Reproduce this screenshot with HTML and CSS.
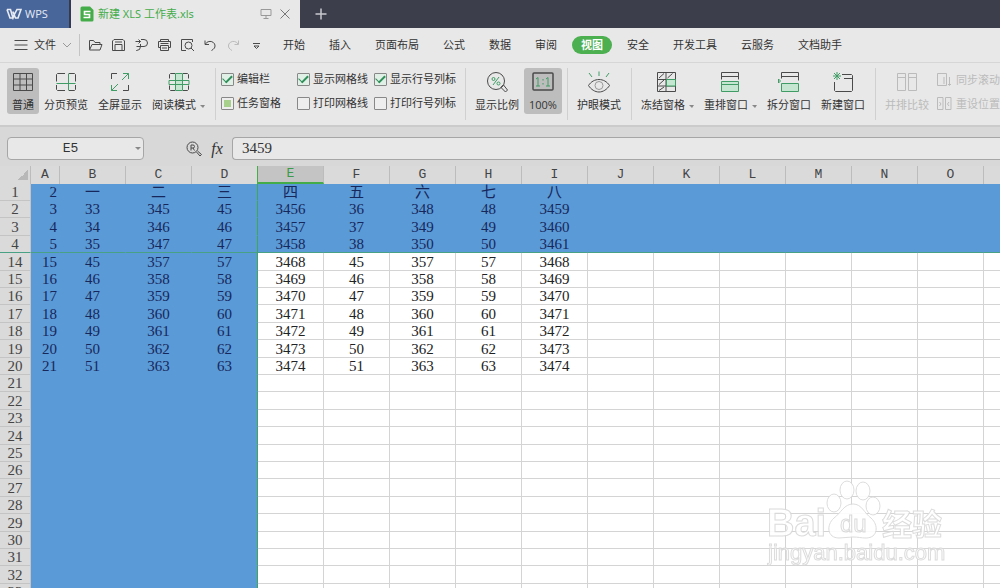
FILE: index.html
```html
<!DOCTYPE html>
<html lang="zh-CN">
<head>
  <meta charset="UTF-8">
  <meta name="viewport" content="width=device-width, initial-scale=1.0">
  <title>新建 XLS 工作表.xls</title>
  <link rel="stylesheet" href="styles.css">
</head>
<body>
  <!-- Title bar -->
  <header class="title-bar">
    <button class="wps-home">
      <svg width="16" height="12" viewBox="0 0 16 12"><path d="M1 1.500h3.500l2.500 8.500 2-5M1 1.500l3 8.500h2.500l4.500-8.500h4L12 10H9.500L6.800 3.500" stroke-width="1.600"/></svg>
      WPS
    </button>
    <div class="file-tab">
      <svg width="14" height="16" viewBox="0 0 14 16"><path d="M2 .5h8L13.500 4v10a1.500 1.500 0 0 1-1.500 1.500H2A1.500 1.500 0 0 1 .5 14V2A1.500 1.500 0 0 1 2 .5z" fill="#45ac4a" stroke="none"/><path d="M10.500 5.500H4.500v3h5v3h-6" stroke="#fff" stroke-width="1.600"/></svg>
      <span class="file-name">新建 XLS 工作表.xls</span>
      <button aria-label="投影"><svg class="gray" width="12" height="12" viewBox="0 0 12 12"><path d="M1 1.500h10v6H1zM6 7.500v3M3.500 10.500h5"/></svg></button>
      <button aria-label="关闭"><svg class="gray-dark" width="12" height="12" viewBox="0 0 12 12"><path d="M1.500 1.500l9 9M10.500 1.500l-9 9"/></svg></button>
    </div>
    <button class="new-tab" aria-label="新建"><svg width="12" height="12" viewBox="0 0 12 12"><path d="M6 .5v11M.5 6h11" stroke-width="1.500"/></svg></button>
  </header>

  <!-- Menu bar -->
  <nav class="menu-bar">
    <button class="file-menu">
      <svg width="14" height="12" viewBox="0 0 14 12"><path d="M.5 1.500h13M.5 6h13M.5 10.500h13"/></svg>
      文件
      <svg class="gray" width="10" height="8" viewBox="0 0 10 8"><path d="M1 2l4 4 4-4"/></svg>
    </button>
    <div class="quick-access">
      <button aria-label="打开"><svg width="15" height="14" viewBox="0 0 15 14"><path d="M1.500 11.500v-9h4l1.500 2h5v2M1.500 12l2.500-5.500h10L12 12z"/></svg></button>
      <button aria-label="保存"><svg width="15" height="14" viewBox="0 0 15 14"><path d="M1.500 3l1.500-1.500h9L13.500 3v9.500h-12zM4 12V6.500h7V12M4 4h7"/></svg></button>
      <button aria-label="输出PDF"><svg width="15" height="14" viewBox="0 0 15 14"><path d="M1.500 3.500h5M4.500 1.500l2 2-2 2M7 1.500h3a3.500 3.500 0 0 1 0 7H2.500M6.500 6v2.500a4 4 0 0 1-4 4H2"/></svg></button>
      <button aria-label="打印"><svg width="15" height="14" viewBox="0 0 15 14"><path d="M3.500 3.500v-2h8v2M3.500 9.500h-2v-6h12v6h-2M3.500 7.500h8v5h-8zM5 10h5M3.500 5.500h8"/></svg></button>
      <button aria-label="打印预览"><svg width="15" height="14" viewBox="0 0 15 14"><path d="M6 12.500H1.500v-11h11V4"/><circle cx="8.500" cy="7.500" r="3.500"/><path d="M11 10l3 3"/></svg></button>
      <button aria-label="撤销"><svg width="15" height="14" viewBox="0 0 15 14"><path d="M2 2.500v4h4M2.500 6A5 4.500 0 1 1 10 11.500L8.500 12.500"/></svg></button>
      <button aria-label="恢复" disabled><svg class="gray-light" width="15" height="14" viewBox="0 0 15 14"><path d="M12.500 2.500v4h-4M12 6A5 4.500 0 1 0 4.500 11.500L6 12.500"/></svg></button>
      <button aria-label="更多"><svg width="15" height="14" viewBox="0 0 15 14"><path d="M4 5.500h7M5 8l2.500 2.500L10 8z"/></svg></button>
    </div>
    <div class="tabs">
      <button>开始</button>
      <button>插入</button>
      <button>页面布局</button>
      <button>公式</button>
      <button>数据</button>
      <button>审阅</button>
      <button class="active">视图</button>
      <button>安全</button>
      <button>开发工具</button>
      <button>云服务</button>
      <button>文档助手</button>
    </div>
  </nav>

  <!-- Ribbon -->
  <section class="ribbon">
    <div class="group">
      <button class="tool pressed">
        <svg width="22" height="22" viewBox="0 0 22 22"><path d="M1.500 2.500h19v17h-19zM1.500 8h19M1.500 14h19M8 2.500v17M14.500 2.500v17"/></svg>
        <span>普通</span>
      </button>
      <button class="tool">
        <svg width="22" height="22" viewBox="0 0 22 22"><path d="M1.500 10.500v-7l1-1h7.500M14 2.500h5.500l1 1v7M1.500 14v4.500l1 1h7.500M14 19.500h5.500l1-1V14"/><path class="green" d="M1.500 12.500h19M13.500 2.500v17"/></svg>
        <span>分页预览</span>
      </button>
      <button class="tool">
        <svg width="22" height="22" viewBox="0 0 22 22"><path d="M2.500 8V2.500H8M14 19.500h5.500V14"/><path class="green" d="M13 9l6.500-6.500M14 2.500h5.500V8M9 13l-6.500 6.500M2.500 14v5.500H8"/></svg>
        <span>全屏显示</span>
      </button>
      <button class="tool">
        <svg width="22" height="22" viewBox="0 0 22 22"><path d="M1.500 7.500v-4l1-1H7M15 2.500h4.500l1 1v4M1.500 14.500v4l1 1H7M15 19.500h4.500l1-1v-4"/><path class="green fill" d="M7.500 2.500h7v17h-7z"/><path class="green" d="M1 9.500h20v4H1z"/></svg>
        <span class="drop">阅读模式</span>
      </button>
    </div>
    <div class="group checks">
      <label><input type="checkbox" checked>编辑栏</label>
      <label><input type="checkbox" checked>显示网格线</label>
      <label><input type="checkbox" checked>显示行号列标</label>
      <label><input type="checkbox" class="partial">任务窗格</label>
      <label><input type="checkbox">打印网格线</label>
      <label><input type="checkbox">打印行号列标</label>
    </div>
    <div class="group">
      <button class="tool">
        <svg width="22" height="22" viewBox="0 0 22 22"><circle cx="10" cy="10" r="8.500"/><path d="M16 15l1.500-1 4 5-2 2-4.500-4.500z"/><path class="green" d="M13 6l-6 8"/><circle class="green" cx="7.500" cy="8" r="1.500"/><circle class="green" cx="12.500" cy="12.500" r="1.500"/></svg>
        <span>显示比例</span>
      </button>
      <button class="tool pressed">
        <svg width="22" height="22" viewBox="0 0 22 22"><rect x="1" y="2" width="20" height="17" rx="1" stroke-width="1.500"/><path class="green" d="M4 8l2-1.500V15M4 15h4M11 8v1.500M11 12v1.500M14 8l2-1.500V15M14 15h4"/></svg>
        <span>100%</span>
      </button>
    </div>
    <div class="group">
      <button class="tool">
        <svg width="22" height="22" viewBox="0 0 22 22"><path d="M.5 14.500C3 10.500 7 8.500 11 8.500s8 2 10.500 6c-2.500 4-6.500 6.500-10.500 6.500S3 18.500.5 14.500z"/><circle class="gray" cx="11" cy="14.500" r="4"/><path class="green" d="M1 2l3 4M11 .5V5M21 2l-3 4"/></svg>
        <span>护眼模式</span>
      </button>
    </div>
    <div class="group">
      <button class="tool">
        <svg width="22" height="22" viewBox="0 0 22 22"><path d="M1.500 1.500h18v19h-18zM1.500 8.500h18M1.500 15h18M10 1.500v19M3 7l5-4.500M11.500 7l5-4.500M3 13.500l5-4.500M3 19.500L8 16"/><path class="green fill" d="M10.500 8.500h9v6.500h-9z"/></svg>
        <span class="drop">冻结窗格</span>
      </button>
      <button class="tool">
        <svg width="22" height="22" viewBox="0 0 22 22"><path d="M2.500 8.500v-7h17v7M2.500 5.500h17"/><path class="green fill" d="M2.500 10.500h17v10h-17z"/><path class="green" d="M2.500 13.500h17"/></svg>
        <span class="drop">重排窗口</span>
      </button>
      <button class="tool">
        <svg width="22" height="22" viewBox="0 0 22 22"><path d="M3.500 7.500v-6h17v8M3.500 5.500h17"/><path class="green fill" d="M3.500 12.500h17v8h-17z"/><path class="green" d="M.5 8l2 2-2 2z"/></svg>
        <span>拆分窗口</span>
      </button>
      <button class="tool">
        <svg width="22" height="22" viewBox="0 0 22 22"><path d="M2.500 11v8.500l1 1h16l1-1v-15l-1-1H10M12 7.500h8.500"/><path class="green" d="M5 1v8M1 5h8M2 2l6 6M8 2L2 8"/></svg>
        <span>新建窗口</span>
      </button>
    </div>
    <div class="group">
      <button class="tool" disabled>
        <svg width="22" height="22" viewBox="0 0 22 22"><path d="M1.500 2.500h8v17h-8zM12.500 2.500h8v17h-8zM1.500 6.500h8M12.500 6.500h8"/></svg>
        <span>并排比较</span>
      </button>
      <div class="side-tools">
        <button disabled><svg width="15" height="14" viewBox="0 0 15 14"><path d="M.5.5h9v12h-9zM7 4v7M12.500 4v8M14 11l-1.500 1.500L11 11"/></svg>同步滚动</button>
        <button disabled><svg width="15" height="14" viewBox="0 0 15 14"><path d="M.5.5h5.500v12H.5zM8.500.5H14v12H8.500zM2.500 5L4 7 2.500 9M12 5l-1.500 2L12 9"/></svg>重设位置</button>
      </div>
    </div>
  </section>

  <!-- Formula bar -->
  <section class="formula-bar">
    <div class="name-box">
      <input type="text" value="E5" aria-label="名称框">
      <button aria-label="名称列表"></button>
    </div>
    <button class="find" aria-label="查找"><svg width="16" height="16" viewBox="0 0 16 16"><circle cx="6.500" cy="6.500" r="5.500"/><path d="M10.500 11l3.500 4 1.500-1.500-4-3.500M5 9.500V4h2a1.500 1.500 0 0 1 0 3H5M7 7l1.500 2.500"/></svg></button>
    <button class="fx" aria-label="插入函数">fx</button>
    <input class="formula" type="text" value="3459" aria-label="编辑栏">
  </section>

  <!-- Sheet -->
  <main class="sheet">
    <table id="grid">
      <colgroup id="cols"></colgroup>
      <thead id="grid-head"></thead>
      <tbody id="grid-body"></tbody>
    </table>
  </main>

  <svg class="watermark" width="190" height="100" viewBox="0 0 190 100">
    <ellipse cx="74" cy="31" rx="7" ry="9"/>
    <ellipse cx="87" cy="18" rx="7" ry="9"/>
    <ellipse cx="103" cy="19" rx="7" ry="9"/>
    <ellipse cx="113" cy="34" rx="7" ry="9"/>
    <path d="M93 32c9 0 11 9 18 14 8 7 7 20-5 20-5 0-8-1-13-1s-9 1-14 1c-12 0-13-13-5-20 7-5 10-14 19-14z"/>
    <text class="brand" x="7" y="64">Bai</text>
    <text class="du" x="80" y="60">du</text>
    <text class="cjk" x="122" y="63">经验</text>
    <text class="url" x="8" y="88">jingyan.baidu.com</text>
  </svg>

  <script>
    const letters = "ABCDEFGHIJKLMNOPQRSTUVWXYZ".split("");
    const firstRow = ["2", "一", "二", "三", "四", "五", "六", "七", "八"];
    // rows 5 - 13 are scrolled out of view behind the frozen pane
    const rowNumbers = [1, 2, 3, 4];
    for (let n = 14; n <= 60; n++) rowNumbers.push(n);

    // Values of one row, columns A to I
    function rowValues(n) {
      if (n === 1) return firstRow;
      if (n > 20) return [];
      return [n + 1, n + 31, n + 343, n + 43, n + 3454, n < 14 ? n + 34 : n + 31,
              n < 14 ? n + 346 : n + 343, n < 14 ? n + 46 : n + 43, n < 14 ? n + 3457 : n + 3454];
    }

    document.getElementById("cols").innerHTML =
      `<col class="col-row"><col class="col-a">` + letters.slice(1).map(() => "<col>").join("");

    document.getElementById("grid-head").innerHTML =
      `<tr><th class="corner"></th>` +
      letters.map(l => `<th class="${l === "E" ? "selected" : ""}${l === "D" ? "edge" : ""}">${l}</th>`).join("") +
      `</tr>`;

    document.getElementById("grid-body").innerHTML = rowNumbers.map(n => {
      const values = rowValues(n);
      const cells = letters.map((l, i) => `<td>${values[i] === undefined ? "" : values[i]}</td>`).join("");
      return `<tr class="${n <= 4 ? "frozen" : ""}"><th>${n}</th>${cells}</tr>`;
    }).join("");
  </script>
</body>
</html>
```
FILE: styles.css
```css
* {
  box-sizing: border-box;
}

body {
  margin: 0;
  height: 100vh;
  display: flex;
  flex-direction: column;
  overflow: hidden;
  background: #e8e8e8;
  color: #333;
  font-family: "Open Sans", "Noto Sans CJK SC", sans-serif;
  font-size: 11px;
  line-height: 16px;
  white-space: nowrap;
}

button {
  border: none;
  padding: 0;
  background: none;
  color: inherit;
  font: inherit;
  cursor: pointer;
}

input {
  font: inherit;
  color: inherit;
}

svg {
  display: block;
  flex: none;
  fill: none;
  stroke: #4a4a4a;
}

.green {
  stroke: #3f9c64;
}

.green.fill {
  fill: #c5e6d0;
}

.gray {
  stroke: #999;
}

.gray-dark {
  stroke: #777;
}

.gray-light {
  stroke: #c4c4c4;
}

/* Title bar */
.title-bar {
  display: flex;
  flex: none;
  height: 28px;
  background: #3c3e4c;
}

.wps-home {
  display: flex;
  align-items: center;
  gap: 3px;
  width: 71px;
  padding-left: 6px;
  background: #49669b;
  border-right: 2px solid #343a50;
  color: #e6ebf4;
}

.wps-home svg {
  stroke: #e6ebf4;
}

.file-tab {
  display: flex;
  align-items: center;
  width: 229px;
  padding: 0 9px;
  gap: 7px;
  background: #e8e8e8;
}

.file-name {
  flex: 1;
  margin-left: -3px;
  color: #45ac4a;
  font-family: "Noto Sans", "Noto Sans CJK SC", sans-serif;
}

.new-tab {
  padding: 0 15px;
}

.new-tab svg {
  stroke: #c8c9ce;
}

/* Menu bar */
.menu-bar {
  display: flex;
  flex: none;
  align-items: center;
  height: 35px;
  border-bottom: 1px solid #d6d6d6;
}

.file-menu {
  display: flex;
  align-items: center;
  gap: 6px;
  height: 22px;
  padding: 0 7px 0 14px;
  border-right: 1px solid #c4c4c4;
}

.quick-access {
  display: flex;
  gap: 8px;
  padding: 0 10px 0 8px;
}

.tabs {
  display: flex;
  gap: 6px;
}

.tabs button {
  height: 18px;
  padding: 0 9px;
  border-radius: 9px;
}

.tabs .active {
  background: #4caf50;
  color: #fff;
  font-weight: bold;
}

/* Ribbon */
.ribbon {
  display: flex;
  flex: none;
  height: 64px;
  padding: 5px 0 5px 7px;
  border-bottom: 2px solid #cbcbcb;
}

.group {
  display: flex;
  flex: none;
  align-items: flex-start;
}

.group + .group {
  margin-left: 5px;
  padding-left: 4px;
  border-left: 1px solid #d0d0d0;
}

.tool {
  display: flex;
  flex-direction: column;
  align-items: center;
  gap: 4px;
  height: 46px;
  padding: 3px 5px 0;
  border-radius: 3px;
}

.pressed {
  background: #bdbdbd;
}

.drop::after {
  content: "";
  display: inline-block;
  margin-left: 4px;
  border: 3px solid transparent;
  border-top-color: #888;
  border-bottom: none;
  border-right-width: 2px;
  vertical-align: middle;
}

button:disabled {
  color: #bbb;
  cursor: default;
}

button:disabled svg {
  stroke: #bbb;
}

.ribbon .checks {
  display: grid;
  grid-template-columns: 76px 77px auto;
  align-content: start;
  row-gap: 8px;
  padding: 3px 4px 0 5px;
}

.checks label {
  display: flex;
  align-items: center;
  gap: 3px;
}

.checks input {
  appearance: none;
  display: grid;
  place-items: center;
  width: 13px;
  height: 13px;
  margin: 0;
  border: 1px solid #888;
  border-radius: 1px;
  background: #eee;
}

.checks input:checked {
  background: #e0f0e6;
}

.checks input:checked::before {
  content: "";
  width: 8px;
  height: 4px;
  margin-bottom: 3px;
  border-left: 1px solid #2f8f58;
  border-bottom: 2px solid #2f8f58;
  transform: rotate(-45deg);
}

.checks .partial::before {
  content: "";
  width: 7px;
  height: 7px;
  background: #a8d08d;
}

.side-tools {
  display: grid;
  row-gap: 8px;
  padding: 4px 0 0 3px;
}

.side-tools button {
  display: flex;
  align-items: center;
  gap: 4px;
}

/* Formula bar */
.formula-bar {
  display: flex;
  flex: none;
  align-items: center;
  height: 39px;
  padding: 4px 0 0 7px;
  background: #d8d8d8;
}

.name-box,
.formula {
  height: 23px;
  border: 1px solid #a6a6a6;
  border-radius: 4px;
  background: #e8e8e8;
}

.name-box {
  display: flex;
  align-items: center;
  width: 137px;
}

.name-box input {
  flex: 1;
  min-width: 0;
  padding: 0;
  border: none;
  background: none;
  font-family: "Liberation Mono", monospace;
  font-size: 13px;
  text-align: center;
}

.name-box button {
  margin: 0 2px;
  border: 3px solid transparent;
  border-top-color: #888;
  border-bottom: none;
}

.find {
  margin-left: 42px;
}

.fx {
  width: 30px;
  font: italic 16px/20px "Liberation Serif", serif;
}

.formula {
  flex: 1;
  min-width: 0;
  padding: 0 9px;
  border-right: none;
  border-radius: 4px 0 0 4px;
  font-family: "Liberation Serif", serif;
  font-size: 15px;
}

/* Sheet */
.sheet {
  flex: 1;
  min-height: 0;
  overflow: auto;
  scrollbar-width: none;
  background: #fff;
}

#grid {
  width: 100%;
  table-layout: fixed;
  border-collapse: separate;
  border-spacing: 0;
}

col {
  width: 66px;
}

.col-row {
  width: 31px;
}

.col-a {
  width: 29px;
}

#grid th,
#grid td {
  height: 17px;
  padding: 0;
  font-weight: normal;
  line-height: 16px;
  text-align: center;
}

#grid th {
  background: #dadada;
  color: #444;
}

#grid thead th {
  border-right: 1px solid #bcbcbc;
  font-family: "Liberation Mono", monospace;
  font-size: 13px;
}

#grid .corner {
  background: linear-gradient(135deg, #dadada 50%, #b8b8b8 50%) 18px 4px / 10px 10px no-repeat #dadada;
}

#grid .selected {
  background: #c4c4c4;
  border-bottom: 2px solid #45ac4a;
  color: #3c9a48;
}

#grid .edge {
  border-right-color: #45ac4a;
}

#grid tbody th {
  border-right: 1px solid #c4c4c4;
  border-bottom: 1px solid #c4c4c4;
  font-family: "Liberation Serif", serif;
  font-size: 15px;
}

#grid td {
  border-right: 1px solid #d4d4d4;
  border-bottom: 1px solid #d4d4d4;
  color: #222;
  font-family: "Liberation Serif", "Noto Sans CJK SC", serif;
  font-size: 15px;
}

/* every fifth and third row is one pixel taller */
#grid tbody tr:nth-child(5n + 3) > *,
#grid tbody tr:nth-child(5n) > * {
  height: 18px;
}

#grid .frozen td,
#grid td:nth-child(-n + 5) {
  background: #5a9ad6;
  border-color: #5a9ad6;
  color: #17275c;
}

#grid td:nth-child(2) {
  padding-right: 2px;
  text-align: right;
}

#grid td:nth-child(5) {
  border-right-color: #3fa557;
}

#grid .frozen:nth-child(4) > * {
  border-bottom-color: #48a184;
}

/* Watermark */
.watermark {
  position: fixed;
  right: 50px;
  bottom: 16px;
  fill: #fff;
  stroke: #d8d8d8;
  opacity: 0.9;
  font-family: "Liberation Sans", "Noto Sans CJK SC", sans-serif;
  pointer-events: none;
}

.brand {
  font-size: 38px;
  font-weight: bold;
}

.du {
  font-size: 24px;
}

.cjk {
  font-size: 30px;
  font-weight: bold;
}

.url {
  font-size: 22px;
}
```
